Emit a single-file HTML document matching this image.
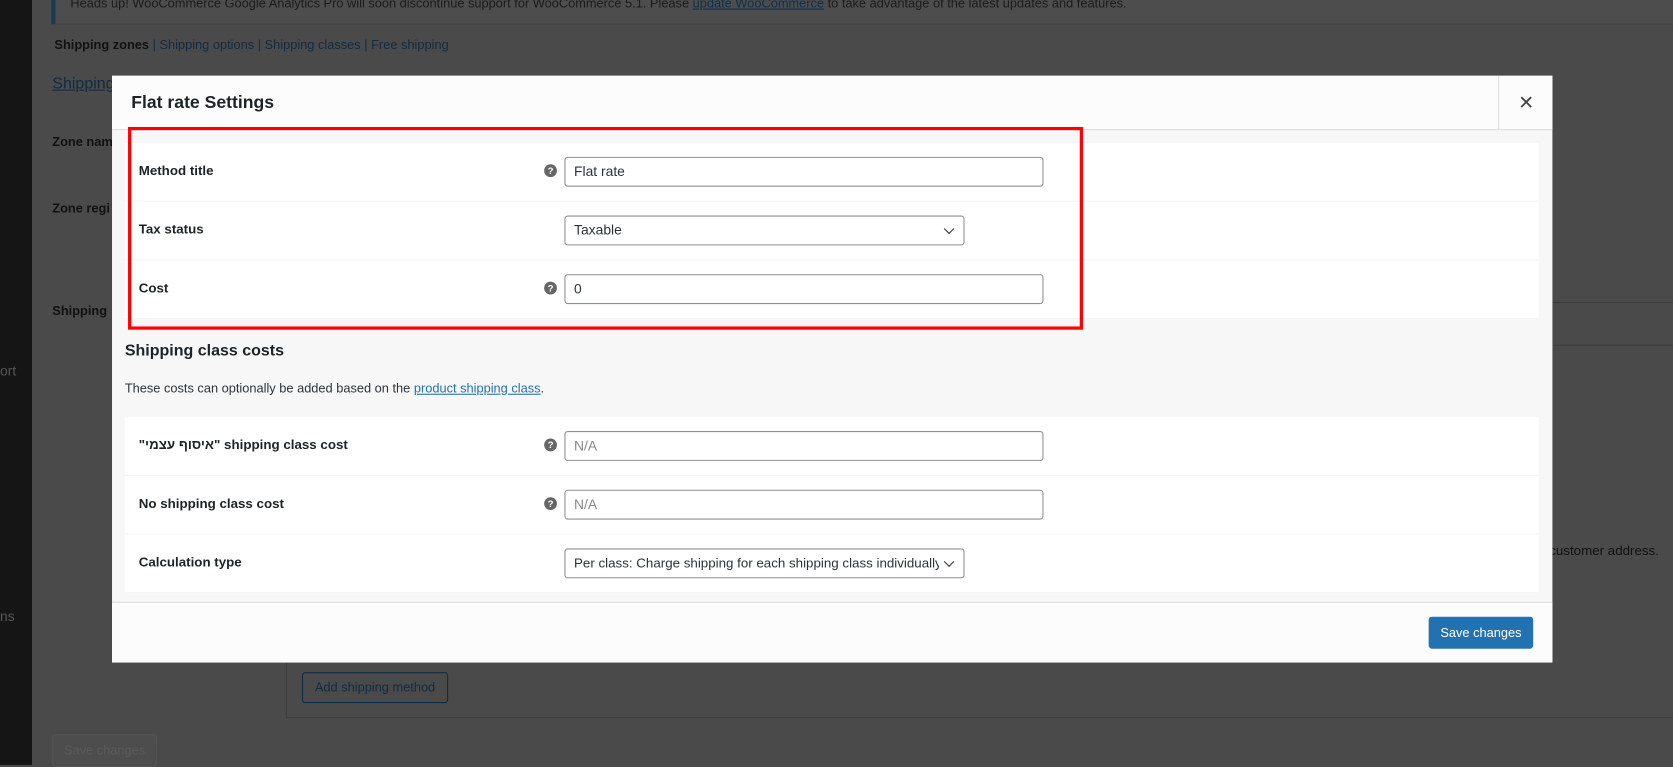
<!DOCTYPE html>
<html><head><meta charset="utf-8"><style>
html,body{margin:0;padding:0;width:1673px;height:765px;overflow:hidden;background:#4a4a4a}
#w{position:absolute;left:0;top:0;width:1568px;height:717px;transform:scale(1.06696);transform-origin:0 0;font-family:"Liberation Sans","Noto Sans CJK JP",sans-serif;color:#1d2327}
.a{position:absolute}
.t{font-size:13px;color:#111}
.lab{position:absolute;left:13px;font-size:12.5px;font-weight:bold;color:#1d2327}
.row{position:absolute;left:12px;width:1325px;height:54px;background:#fff;border-bottom:1px solid #f4f4f4}
.q{position:absolute;left:393px;top:20px;width:12px;height:12px;border-radius:50%;background:#666;color:#fff;font-size:9px;font-weight:bold;text-align:center;line-height:12px}
.inp{position:absolute;left:412px;top:13px;width:449px;border:1px solid #8c8f94;border-radius:3px;background:#fff;font-size:13px;line-height:26px;padding-left:8px;box-sizing:border-box;height:28px;color:#2c3338}
.sel{width:375px}
.sel:after{content:"";position:absolute;right:10px;top:8px;width:6px;height:6px;border-right:1.5px solid #333;border-bottom:1.5px solid #333;transform:rotate(45deg)}
.ph{color:#888}
</style></head><body><div id="w">
<div class="a" style="left:0;top:0;width:30px;height:717px;background:#151515"></div>
<div class="a" style="left:30px;top:0;width:1538px;height:717px;background:#4a4a4a"></div>
<div class="a" style="left:48px;top:0;width:1520px;height:22px;background:#4d4d4d;border-left:4px solid #1a3a52;border-bottom:1px solid #444"></div>
<div class="a t" style="left:66px;top:-4px;font-size:12px;color:#1b1b1b">Heads up! WooCommerce Google Analytics Pro will soon discontinue support for WooCommerce 5.1. Please <u style="color:#0e2f4a">update WooCommerce</u> to take advantage of the latest updates and features.</div>
<div class="a" style="left:51px;top:35px;font-size:12px;color:#111"><b>Shipping zones</b> <span style="color:#0f2c44">| Shipping options | Shipping classes | Free shipping</span></div>
<div class="a" style="left:49px;top:70px;font-size:15px;color:#0f2c44;text-decoration:underline">Shipping</div>
<div class="a" style="left:49px;top:126px;font-size:12px;font-weight:bold;color:#111">Zone name</div>
<div class="a" style="left:49px;top:188px;font-size:12px;font-weight:bold;color:#111">Zone regi</div>
<div class="a" style="left:49px;top:284px;font-size:12px;font-weight:bold;color:#111">Shipping</div>
<div class="a" style="left:0;top:340px;font-size:13px;color:#555">ort</div>
<div class="a" style="left:0;top:570px;font-size:13px;color:#555">ns</div>
<div class="a" style="left:1455px;top:283px;width:113px;height:1px;background:#3d3d3d"></div>
<div class="a" style="left:1455px;top:323px;width:113px;height:1px;background:#3d3d3d"></div>
<div class="a" style="left:1452px;top:509px;font-size:12.5px;color:#111">customer address.</div>
<div class="a" style="left:268px;top:620px;width:1300px;height:52px;border-left:1px solid #3d3d3d;border-bottom:1px solid #3d3d3d"></div>
<div class="a" style="left:283px;top:630px;width:135px;height:27px;border:1px solid #0f2c44;border-radius:3px;font-size:12px;color:#0f2c44;text-align:center;line-height:27px">Add shipping method</div>
<div class="a" style="left:49px;top:688px;width:96px;height:29px;border:1px solid #555;border-radius:3px;font-size:12px;color:#5a5a5a;text-align:center;line-height:29px;background:#4d4d4d">Save changes</div>

<div class="a" style="left:105px;top:71px;width:1350px;height:549px;background:#f7f7f7">
  <div class="a" style="left:0;top:0;width:1350px;height:50px;background:#fcfcfc;border-bottom:1px solid #ddd"></div>
  <div class="a" style="left:18px;top:16px;font-size:16.5px;font-weight:bold;color:#1d2327">Flat rate Settings</div>
  <div class="a" style="left:1299px;top:0;width:51px;height:50px;border-left:1px solid #ddd;font-size:18px;text-align:center;line-height:50px;color:#444">✕</div>
  <div class="row" style="top:63px"><div class="lab" style="top:19px">Method title</div><div class="q">?</div><div class="inp">Flat rate</div></div>
  <div class="row" style="top:118px"><div class="lab" style="top:19px">Tax status</div><div class="inp sel">Taxable</div></div>
  <div class="row" style="top:173px"><div class="lab" style="top:19px">Cost</div><div class="q">?</div><div class="inp">0</div></div>
  <div class="a" style="left:15px;top:48px;width:889px;height:184px;border:3px solid #f00;box-sizing:content-box"></div>
  <div class="a" style="left:12px;top:249px;font-size:15px;font-weight:bold;color:#1d2327">Shipping class costs</div>
  <div class="a" style="left:12px;top:286px;font-size:12px;color:#2c3338">These costs can optionally be added based on the <u style="color:#2271b1">product shipping class</u>.</div>
  <div class="row" style="top:320px"><div class="lab" style="top:19px">"איסוף עצמי" shipping class cost</div><div class="q">?</div><div class="inp ph">N/A</div></div>
  <div class="row" style="top:375px"><div class="lab" style="top:19px">No shipping class cost</div><div class="q">?</div><div class="inp ph">N/A</div></div>
  <div class="row" style="top:430px"><div class="lab" style="top:19px">Calculation type</div><div class="inp sel"><div style="width:342px;white-space:nowrap;overflow:hidden;font-size:12.5px">Per class: Charge shipping for each shipping class individually</div></div></div>
  <div class="a" style="left:0;top:493px;width:1350px;height:56px;background:#fcfcfc;border-top:1px solid #ddd"></div>
  <div class="a" style="left:1234px;top:507px;width:98px;height:30px;background:#2271b1;border-radius:3px;color:#fff;font-size:12px;text-align:center;line-height:30px">Save changes</div>
</div>
</div></body></html>
